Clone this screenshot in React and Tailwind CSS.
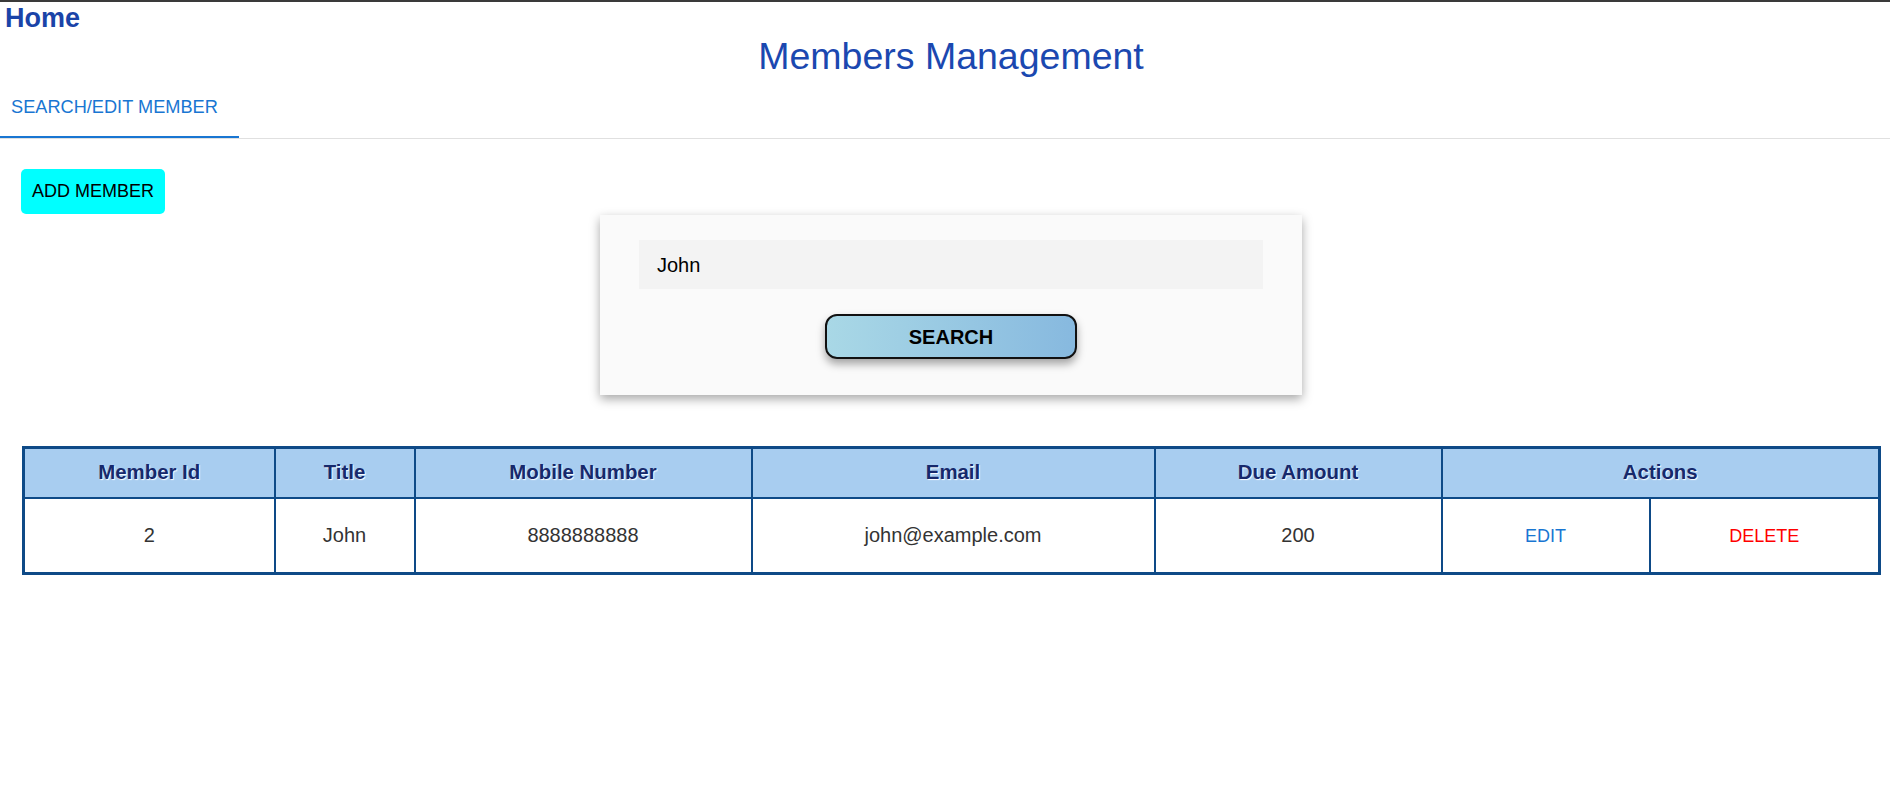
import React from "react";

const members = [
    { id: 2, title: "John", mobile: "8888888888", email: "john@example.com", due: 200 },
];

const COL_WIDTHS = ["w-[251px]", "w-[140px]", "w-[337px]", "w-[403px]", "w-[287px]", "w-[208px]", "w-[230px]"];

export default function App() {
    return (
        <div className="min-h-screen bg-white font-['Liberation_Sans',Arial,sans-serif]">
            <div className="h-[2px] bg-[#3a3a3a]" />

            {/* Header */}
            <div className="mt-[3px] pl-[5px] text-[27px] leading-[27px] font-bold text-[#1a44a8]">Home</div>
            <div className="mt-[6px] pl-[22px] pr-[10px] text-center text-[37.5px] leading-[37px] text-[#1b48b0]">
                Members Management
            </div>

            {/* Tabs */}
            <div className="border-b border-[#e0e0e0]">
                <div className="w-[239px] pt-[23px] pb-[20px] pl-[11px] border-b-2 border-[#1976d2] text-[18.2px] leading-[18px] text-[#1976d2]">
                    SEARCH/EDIT MEMBER
                </div>
            </div>

            <div className="pl-[22px] pr-[10px]">
                <button className="mt-[30px] -ml-[1px] w-[144px] h-[45px] rounded-[5px] bg-[#00ffff] text-[18px] text-black">
                    ADD MEMBER
                </button>

                {/* Search card */}
                <div className="mt-[1px] mx-auto w-[702px] h-[180px] bg-[#fafafa] shadow-[0_4px_10px_rgba(0,0,0,0.35)] px-[39px] pt-[25px] flex flex-col items-center">
                    <div className="w-full h-[49px] bg-[#f3f3f3] flex items-center pl-[18px] text-[20px] text-black">John</div>
                    <button className="mt-[25px] w-[252px] h-[45px] rounded-[12px] border-2 border-[#111] bg-gradient-to-r from-[#a9d8e6] to-[#87b9df] shadow-[0_5px_9px_rgba(0,0,0,0.35)] text-[20px] font-bold text-black">
                        SEARCH
                    </button>
                </div>

                {/* Members table */}
                <table className="mt-[51px] w-[1856px] table-fixed border-collapse border-[3px] border-[#0e4a87]">
                    <colgroup>
                        {COL_WIDTHS.map((w, i) => (
                            <col key={i} className={w} />
                        ))}
                    </colgroup>
                    <thead>
                        <tr className="h-[50px] bg-[#a8cdf0] text-[20.4px] font-bold text-[#16296c] [text-shadow:1px_1px_1px_#fff]">
                            <th className="border-2 border-[#0e4a87]">Member Id</th>
                            <th className="border-2 border-[#0e4a87]">Title</th>
                            <th className="border-2 border-[#0e4a87]">Mobile Number</th>
                            <th className="border-2 border-[#0e4a87]">Email</th>
                            <th className="border-2 border-[#0e4a87]">Due Amount</th>
                            <th colSpan={2} className="border-2 border-[#0e4a87]">Actions</th>
                        </tr>
                    </thead>
                    <tbody>
                        {members.map((m) => (
                            <tr key={m.id} className="h-[76px] text-center text-[20px] text-[#333]">
                                <td className="border-2 border-[#0e4a87]">{m.id}</td>
                                <td className="border-2 border-[#0e4a87]">{m.title}</td>
                                <td className="border-2 border-[#0e4a87]">{m.mobile}</td>
                                <td className="border-2 border-[#0e4a87]">{m.email}</td>
                                <td className="border-2 border-[#0e4a87]">{m.due}</td>
                                <td className="border-2 border-[#0e4a87]">
                                    <span className="text-[18px] text-[#1976d2]">EDIT</span>
                                </td>
                                <td className="border-2 border-[#0e4a87]">
                                    <span className="text-[18px] text-[#ff0000]">DELETE</span>
                                </td>
                            </tr>
                        ))}
                    </tbody>
                </table>
            </div>
        </div>
    );
}
